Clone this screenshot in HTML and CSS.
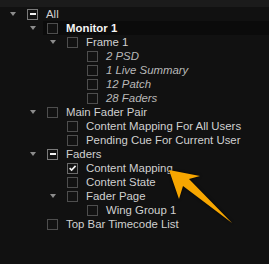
FILE: index.html
```html
<!DOCTYPE html>
<html>
<head>
<meta charset="utf-8">
<link rel="stylesheet" href="styles.css">
</head>
<body>
<div class="panel">
  <div class="topband"></div>
  <ul class="tree">
    <li class="row l0"><span class="tog open"></span><span class="cb partial"></span><span class="lbl">All</span></li>
    <li class="row l1 sel"><span class="tog open"></span><span class="cb"></span><span class="lbl bold">Monitor 1</span></li>
    <li class="row l2"><span class="tog open"></span><span class="cb"></span><span class="lbl">Frame 1</span></li>
    <li class="row l3"><span class="tog"></span><span class="cb"></span><span class="lbl it">2 PSD</span></li>
    <li class="row l3"><span class="tog"></span><span class="cb"></span><span class="lbl it">1 Live Summary</span></li>
    <li class="row l3"><span class="tog"></span><span class="cb"></span><span class="lbl it">12 Patch</span></li>
    <li class="row l3"><span class="tog"></span><span class="cb"></span><span class="lbl it">28 Faders</span></li>
    <li class="row l1"><span class="tog open"></span><span class="cb"></span><span class="lbl">Main Fader Pair</span></li>
    <li class="row l2"><span class="tog"></span><span class="cb"></span><span class="lbl">Content Mapping For All Users</span></li>
    <li class="row l2"><span class="tog"></span><span class="cb"></span><span class="lbl">Pending Cue For Current User</span></li>
    <li class="row l1"><span class="tog open"></span><span class="cb partial"></span><span class="lbl">Faders</span></li>
    <li class="row l2"><span class="tog"></span><span class="cb checked"><svg viewBox="0 0 10 10" width="10" height="10"><path d="M1.8 5.2 L4 7.4 L8.4 2.6" fill="none" stroke="#f2f2f2" stroke-width="1.8"/></svg></span><span class="lbl">Content Mapping</span></li>
    <li class="row l2"><span class="tog"></span><span class="cb"></span><span class="lbl">Content State</span></li>
    <li class="row l2"><span class="tog open"></span><span class="cb"></span><span class="lbl">Fader Page</span></li>
    <li class="row l3"><span class="tog"></span><span class="cb"></span><span class="lbl">Wing Group 1</span></li>
    <li class="row l1"><span class="tog"></span><span class="cb"></span><span class="lbl">Top Bar Timecode List</span></li>
  </ul>
  <svg class="arrow" width="269" height="264" viewBox="0 0 269 264">
    <polygon points="169,170 200,176 189,179 232,223 183,186 179,199" fill="#f7a600"/>
  </svg>
</div>
</body>
</html>
```

FILE: styles.css
```css
html, body {
  margin: 0;
  padding: 0;
  background: #111111;
}
.panel {
  position: relative;
  width: 269px;
  height: 264px;
  overflow: hidden;
  background: #111111;
  font-family: "Liberation Sans", Arial, sans-serif;
  font-size: 11.4px;
  color: #d2d2d2;
}
.topband {
  height: 7px;
  background: #1b1b1b;
}
.tree {
  list-style: none;
  margin: 0;
  padding: 0;
}
.row {
  display: flex;
  align-items: center;
  height: 14px;
  line-height: 14px;
  white-space: nowrap;
}
.l0 { padding-left: 10px; }
.l1 { padding-left: 30px; }
.l2 { padding-left: 50px; }
.l3 { padding-left: 70px; }
.sel {
  background: linear-gradient(to right, #111111 0, #111111 43px, #0b0b0b 43px);
}
.tog {
  width: 17px;
  height: 14px;
  flex: none;
  position: relative;
}
.tog.open::before {
  content: "";
  position: absolute;
  left: 0;
  top: 5px;
  width: 0;
  height: 0;
  border-left: 3px solid transparent;
  border-right: 3px solid transparent;
  border-top: 4px solid #8c8c8c;
}
.cb {
  flex: none;
  width: 9px;
  height: 9px;
  border: 1px solid #4e4e4e;
  background: #121212;
  margin-right: 8px;
  position: relative;
  display: flex;
  align-items: center;
  justify-content: center;
}
.cb.partial {
  border-color: #7a7a7a;
}
.cb.partial::after {
  content: "";
  width: 6px;
  height: 2px;
  background: #f2f2f2;
}
.cb.checked {
  border-color: #6a6a6a;
}
.cb svg {
  display: block;
}
.lbl {
  color: #d0d0d0;
}
.bold {
  font-weight: bold;
  color: #f4f4f4;
}
.it {
  font-style: italic;
  color: #b9b9b9;
}
.arrow {
  position: absolute;
  left: 0;
  top: 0;
  pointer-events: none;
  filter: drop-shadow(0 0 1.5px rgba(0,0,0,0.8));
}
```
